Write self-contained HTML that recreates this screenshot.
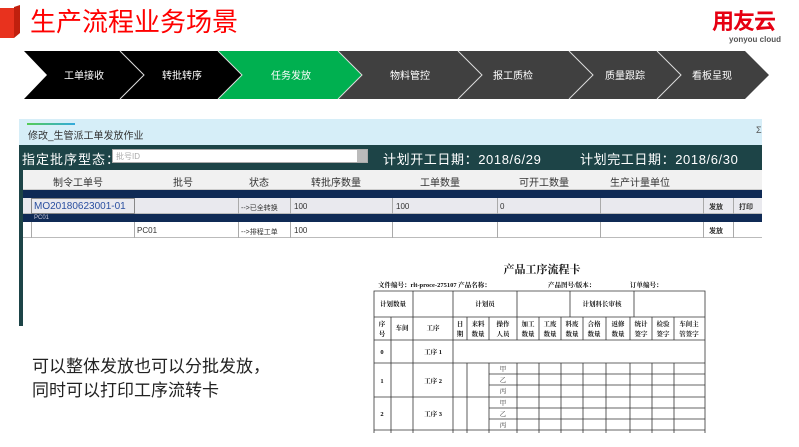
<!DOCTYPE html>
<html><head><meta charset="utf-8"><style>
*{margin:0;padding:0;box-sizing:border-box}
body{width:799px;height:447px;background:#fff;position:relative;overflow:hidden;font-family:"Liberation Sans","Noto Sans CJK SC",sans-serif}
.a{position:absolute}
.t{white-space:nowrap}
</style></head><body>
<svg class="a" style="left:0;top:5px" width="22" height="36"><polygon points="0,3 14,3 14,33 0,33" fill="#e8321e"/><polygon points="14,2 20,0 20,28 14,33" fill="#c0200e"/></svg>
<div class="a t" style="left:30px;top:6px;font-size:26px;color:#f00;line-height:32px">生产流程业务场景</div>
<div class="a t" style="left:712px;top:9px;font-size:22px;font-weight:bold;color:#e60012;line-height:26px;letter-spacing:-1px">用友云</div>
<div class="a t" style="left:729px;top:35px;font-size:8px;color:#555;font-weight:bold;line-height:9px">yonyou cloud</div>
<svg class="a" style="left:0;top:0" width="799" height="110">
<polygon points="24,51 120,51 144,75 120,99 24,99 47,75" fill="#000"/>
<polygon points="120,51 218,51 242,75 218,99 120,99 144,75" fill="#000"/>
<polygon points="218,51 338,51 362,75 338,99 218,99 242,75" fill="#00b050"/>
<polygon points="338,51 458,51 482,75 458,99 338,99 362,75" fill="#404040"/>
<polygon points="458,51 569,51 593,75 569,99 458,99 482,75" fill="#404040"/>
<polygon points="569,51 657,51 681,75 657,99 569,99 593,75" fill="#404040"/>
<polygon points="657,51 745,51 769,75 745,99 657,99 681,75" fill="#404040"/>
<g stroke="#ddd" stroke-width="1" fill="none">
<polyline points="120,51 144,75 120,99"/><polyline points="218,51 242,75 218,99"/><polyline points="338,51 362,75 338,99"/><polyline points="458,51 482,75 458,99"/><polyline points="569,51 593,75 569,99"/><polyline points="657,51 681,75 657,99"/></g>
<g fill="#fff" font-size="10" font-family="Liberation Sans,Noto Sans CJK SC,sans-serif" text-anchor="middle">
<text x="84" y="79">工单接收</text><text x="182" y="79">转批转序</text><text x="291" y="79">任务发放</text><text x="410" y="79">物料管控</text><text x="513" y="79">报工质检</text><text x="625" y="79">质量跟踪</text><text x="712" y="79">看板呈现</text></g>
</svg>
<div class="a" style="left:19px;top:119px;width:743px;height:26px;background:#d6eef8"></div>
<div class="a" style="left:27px;top:123px;width:48px;height:2px;background:linear-gradient(90deg,#5c5,#3ad)"></div>
<div class="a t" style="left:28px;top:127px;font-size:10px;color:#333">修改_生管派工单发放作业</div>
<div class="a t" style="left:756px;top:125px;font-size:9px;color:#555">Σ</div>
<div class="a" style="left:19px;top:145px;width:4px;height:181px;background:#1d4447"></div>
<div class="a" style="left:19px;top:145px;width:743px;height:25px;background:#1d4447"></div>
<div class="a t" style="left:22px;top:149px;font-size:13px;color:#fff;letter-spacing:1px">指定批序型态：</div>
<div class="a" style="left:112px;top:149px;width:256px;height:14px;background:#fff;border:1px solid #aaa"></div>
<div class="a t" style="left:116px;top:151px;font-size:8px;color:#aaa">批号ID</div>
<div class="a" style="left:357px;top:150px;width:10px;height:12px;background:#bbb"></div>
<div class="a t" style="left:383px;top:149px;font-size:13px;color:#fff;letter-spacing:0.6px">计划开工日期：2018/6/29</div>
<div class="a t" style="left:580px;top:149px;font-size:13px;color:#fff;letter-spacing:0.6px">计划完工日期：2018/6/30</div>
<div class="a" style="left:23px;top:170px;width:739px;height:20px;background:#f1f1f1;border-bottom:1px solid #ccc"></div>
<div class="a t" style="left:23px;top:174px;font-size:10px;color:#333;width:739px">
<span class="a" style="left:30px">制令工单号</span><span class="a" style="left:150px">批号</span><span class="a" style="left:226px">状态</span><span class="a" style="left:288px">转批序数量</span><span class="a" style="left:397px">工单数量</span><span class="a" style="left:496px">可开工数量</span><span class="a" style="left:587px">生产计量单位</span></div>
<div class="a" style="left:23px;top:190px;width:739px;height:8px;background:#0f2a55"></div>
<div class="a" style="left:23px;top:198px;width:739px;height:16px;background:#e9e9ee;border-bottom:1px solid #bbb"></div>
<div class="a" style="left:23px;top:214px;width:739px;height:8px;background:#0f2a55"></div>
<div class="a t" style="left:34px;top:214px;font-size:6px;color:#ccd;line-height:8px">PC01</div>
<div class="a" style="left:23px;top:222px;width:739px;height:16px;background:#fff;border-bottom:1px solid #bbb"></div>
<svg class="a" style="left:0;top:198px" width="799" height="40"><g stroke="#aaa">
<line x1="31.5" y1="0" x2="31.5" y2="16"/><line x1="134.5" y1="0" x2="134.5" y2="16"/><line x1="238.5" y1="0" x2="238.5" y2="16"/><line x1="290.5" y1="0" x2="290.5" y2="16"/><line x1="392.5" y1="0" x2="392.5" y2="16"/><line x1="497.5" y1="0" x2="497.5" y2="16"/><line x1="600.5" y1="0" x2="600.5" y2="16"/><line x1="703.5" y1="0" x2="703.5" y2="16"/><line x1="733.5" y1="0" x2="733.5" y2="16"/>
<line x1="31.5" y1="24" x2="31.5" y2="40"/><line x1="134.5" y1="24" x2="134.5" y2="40"/><line x1="238.5" y1="24" x2="238.5" y2="40"/><line x1="290.5" y1="24" x2="290.5" y2="40"/><line x1="392.5" y1="24" x2="392.5" y2="40"/><line x1="497.5" y1="24" x2="497.5" y2="40"/><line x1="600.5" y1="24" x2="600.5" y2="40"/><line x1="703.5" y1="24" x2="703.5" y2="40"/><line x1="733.5" y1="24" x2="733.5" y2="40"/></g>
<rect x="31.5" y="0.5" width="103" height="15" fill="none" stroke="#888"/></svg>
<div class="a t" style="left:34px;top:201px;font-size:10px;color:#2a4fa0">MO20180623001-01</div>
<div class="a t" style="left:241px;top:203px;font-size:7px;color:#333">--&gt;已全转换</div>
<div class="a t" style="left:294px;top:202px;font-size:8px;color:#333">100</div>
<div class="a t" style="left:396px;top:202px;font-size:8px;color:#333">100</div>
<div class="a t" style="left:500px;top:202px;font-size:8px;color:#333">0</div>
<div class="a t" style="left:709px;top:202px;font-size:7px;font-weight:bold;color:#333">发放</div>
<div class="a t" style="left:739px;top:202px;font-size:7px;font-weight:bold;color:#333">打印</div>
<div class="a t" style="left:137px;top:226px;font-size:8px;color:#333">PC01</div>
<div class="a t" style="left:241px;top:227px;font-size:7px;color:#333">--&gt;排程工单</div>
<div class="a t" style="left:294px;top:226px;font-size:8px;color:#333">100</div>
<div class="a t" style="left:709px;top:226px;font-size:7px;font-weight:bold;color:#333">发放</div>
<div class="a t" style="left:32px;top:355px;font-size:17px;color:#222;line-height:24px">可以整体发放也可以分批发放，<br>同时可以打印工序流转卡</div>
<svg class="a" style="left:0;top:0" width="799" height="447" font-family="Liberation Serif,Noto Serif CJK SC,serif">
<text x="542" y="273" font-size="11" font-weight="bold" text-anchor="middle" fill="#111">产品工序流程卡</text>
<g font-size="6.5" fill="#111" font-weight="bold"><text x="378" y="287">文件编号：rlt-proce-275107 产品名称：</text><text x="548" y="287">产品图号/版本：</text><text x="630" y="287">订单编号：</text></g>
<g stroke="#333" stroke-width="0.8" fill="none">
<polyline points="374,433 374,291 705,291 705,433"/>
<line x1="374" y1="317" x2="705" y2="317"/><line x1="374" y1="340" x2="705" y2="340"/><line x1="374" y1="363" x2="705" y2="363"/><line x1="374" y1="397" x2="705" y2="397"/><line x1="374" y1="430" x2="705" y2="430"/>
<line x1="413" y1="291" x2="413" y2="317"/><line x1="453" y1="291" x2="453" y2="317"/><line x1="517" y1="291" x2="517" y2="317"/><line x1="570" y1="291" x2="570" y2="317"/><line x1="634" y1="291" x2="634" y2="317"/>
<line x1="391" y1="317" x2="391" y2="433"/><line x1="413" y1="317" x2="413" y2="433"/><line x1="453" y1="317" x2="453" y2="433"/>
<line x1="467" y1="317" x2="467" y2="340"/><line x1="489" y1="317" x2="489" y2="340"/>
<line x1="467" y1="363" x2="467" y2="433"/><line x1="489" y1="363" x2="489" y2="433"/>
<line x1="517" y1="317" x2="517" y2="340"/><line x1="539" y1="317" x2="539" y2="340"/><line x1="561" y1="317" x2="561" y2="340"/><line x1="583" y1="317" x2="583" y2="340"/><line x1="606" y1="317" x2="606" y2="340"/><line x1="630" y1="317" x2="630" y2="340"/><line x1="652" y1="317" x2="652" y2="340"/><line x1="674" y1="317" x2="674" y2="340"/>
<line x1="517" y1="363" x2="517" y2="433"/><line x1="539" y1="363" x2="539" y2="433"/><line x1="561" y1="363" x2="561" y2="433"/><line x1="583" y1="363" x2="583" y2="433"/><line x1="606" y1="363" x2="606" y2="433"/><line x1="630" y1="363" x2="630" y2="433"/><line x1="652" y1="363" x2="652" y2="433"/><line x1="674" y1="363" x2="674" y2="433"/>
<line x1="489" y1="374" x2="705" y2="374"/><line x1="489" y1="385" x2="705" y2="385"/><line x1="489" y1="408" x2="705" y2="408"/><line x1="489" y1="419" x2="705" y2="419"/>
</g>
<g font-size="6.5" fill="#111" text-anchor="middle" font-weight="bold">
<text x="393" y="306">计划数量</text><text x="485" y="306">计划员</text><text x="602" y="306">计划科长审核</text>
<text x="382" y="326">序</text><text x="382" y="336">号</text><text x="402" y="330">车间</text><text x="433" y="330">工序</text><text x="460" y="326">日</text><text x="460" y="336">期</text>
<text x="478" y="326">来料</text><text x="478" y="336">数量</text><text x="503" y="326">操作</text><text x="503" y="336">人员</text>
<text x="528" y="326">加工</text><text x="528" y="336">数量</text><text x="550" y="326">工废</text><text x="550" y="336">数量</text><text x="572" y="326">料废</text><text x="572" y="336">数量</text><text x="594" y="326">合格</text><text x="594" y="336">数量</text><text x="618" y="326">返修</text><text x="618" y="336">数量</text><text x="641" y="326">统计</text><text x="641" y="336">签字</text><text x="663" y="326">检验</text><text x="663" y="336">签字</text><text x="689" y="326">车间主</text><text x="689" y="336">管签字</text>
<text x="382" y="354">0</text><text x="433" y="354">工序 1</text>
<text x="382" y="383">1</text><text x="433" y="383">工序 2</text>
<text x="382" y="416">2</text><text x="433" y="416">工序 3</text>
</g>
<g font-size="6.5" fill="#333" text-anchor="middle"><text x="503" y="371">甲</text><text x="503" y="382">乙</text><text x="503" y="393">丙</text><text x="503" y="405">甲</text><text x="503" y="416">乙</text><text x="503" y="427">丙</text></g>
</svg>
</body></html>
